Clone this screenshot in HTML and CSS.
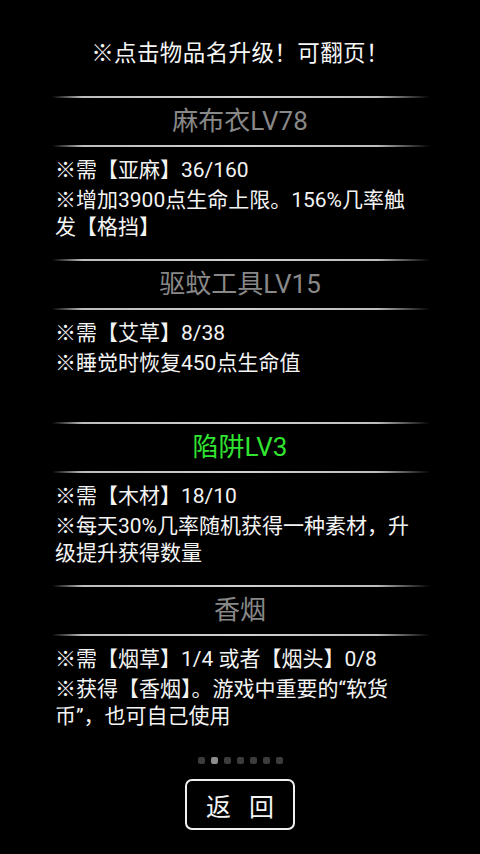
FILE: index.html
```html
<!DOCTYPE html>
<html lang="zh-CN">
<head>
<meta charset="utf-8">
<title>升级</title>
<link rel="stylesheet" href="styles.css">
</head>
<body>
<div class="page">
  <div class="tip">※点击物品名升级！可翻页！</div>
  <div class="item">
    <div class="rule"></div>
    <div class="name">麻布衣LV78</div>
    <div class="rule"></div>
    <div class="desc">
      <p>※需【亚麻】36/160</p>
      <p>※增加3900点生命上限。156%几率触发【格挡】</p>
    </div>
  </div>
  <div class="item">
    <div class="rule"></div>
    <div class="name">驱蚊工具LV15</div>
    <div class="rule"></div>
    <div class="desc">
      <p>※需【艾草】8/38</p>
      <p>※睡觉时恢复450点生命值</p>
    </div>
  </div>
  <div class="item">
    <div class="rule"></div>
    <div class="name green">陷阱LV3</div>
    <div class="rule"></div>
    <div class="desc">
      <p>※需【木材】18/10</p>
      <p>※每天30%几率随机获得一种素材，升级提升获得数量</p>
    </div>
  </div>
  <div class="item">
    <div class="rule"></div>
    <div class="name">香烟</div>
    <div class="rule"></div>
    <div class="desc">
      <p>※需【烟草】1/4 或者【烟头】0/8</p>
      <p>※获得【香烟】。游戏中重要的“软货币”，也可自己使用</p>
    </div>
  </div>
  <div class="dots">
    <span class="dot"></span><span class="dot on"></span><span class="dot"></span><span class="dot"></span><span class="dot"></span><span class="dot"></span><span class="dot"></span>
  </div>
  <div class="btn-row">
    <div class="btn">返 回</div>
  </div>
</div>
</body>
</html>
```

FILE: styles.css
```css
html, body {
  margin: 0;
  padding: 0;
  background: #000;
}
body {
  font-family: "Roboto", "Noto Sans CJK SC", sans-serif;
  color: #f4f4f4;
}
.page {
  width: 480px;
  height: 854px;
  overflow: hidden;
}
.tip {
  padding-top: 38px;
  height: 30px;
  line-height: 30px;
  margin-bottom: 28px;
  text-align: center;
  font-size: 22.5px;
  letter-spacing: 0.4px;
  color: #f6f6f6;
}
.item {
  height: 163px;
}
.rule {
  height: 2px;
  margin-left: 52px;
  width: 378px;
  background: linear-gradient(to right, rgba(200,200,200,0) 0%, #bdbdbd 8%, #d0d0d0 50%, #bdbdbd 86%, rgba(200,200,200,0) 100%);
}
.name {
  height: 47px;
  line-height: 47px;
  text-align: center;
  font-size: 26px;
  color: #888;
}
.name.green {
  color: #30e430;
}
.desc {
  padding: 10px 55px 0;
  font-size: 21px;
  line-height: 27px;
}
.desc p {
  margin: 0 0 3px;
}
.dots {
  margin-top: 9px;
  display: flex;
  justify-content: center;
  gap: 6px;
  padding-left: 1px;
}
.dot {
  width: 7px;
  height: 7px;
  border-radius: 2px;
  background: #3c3c3c;
}
.dot.on {
  background: #8c8c8c;
}
.btn-row {
  margin-top: 15px;
  display: flex;
  justify-content: center;
}
.btn {
  width: 106px;
  height: 47px;
  border: 2px solid #f0f0f0;
  border-radius: 7px;
  display: flex;
  align-items: center;
  justify-content: center;
  font-size: 25px;
  color: #f4f4f4;
  letter-spacing: 6px;
  text-indent: 6px;
}
```
